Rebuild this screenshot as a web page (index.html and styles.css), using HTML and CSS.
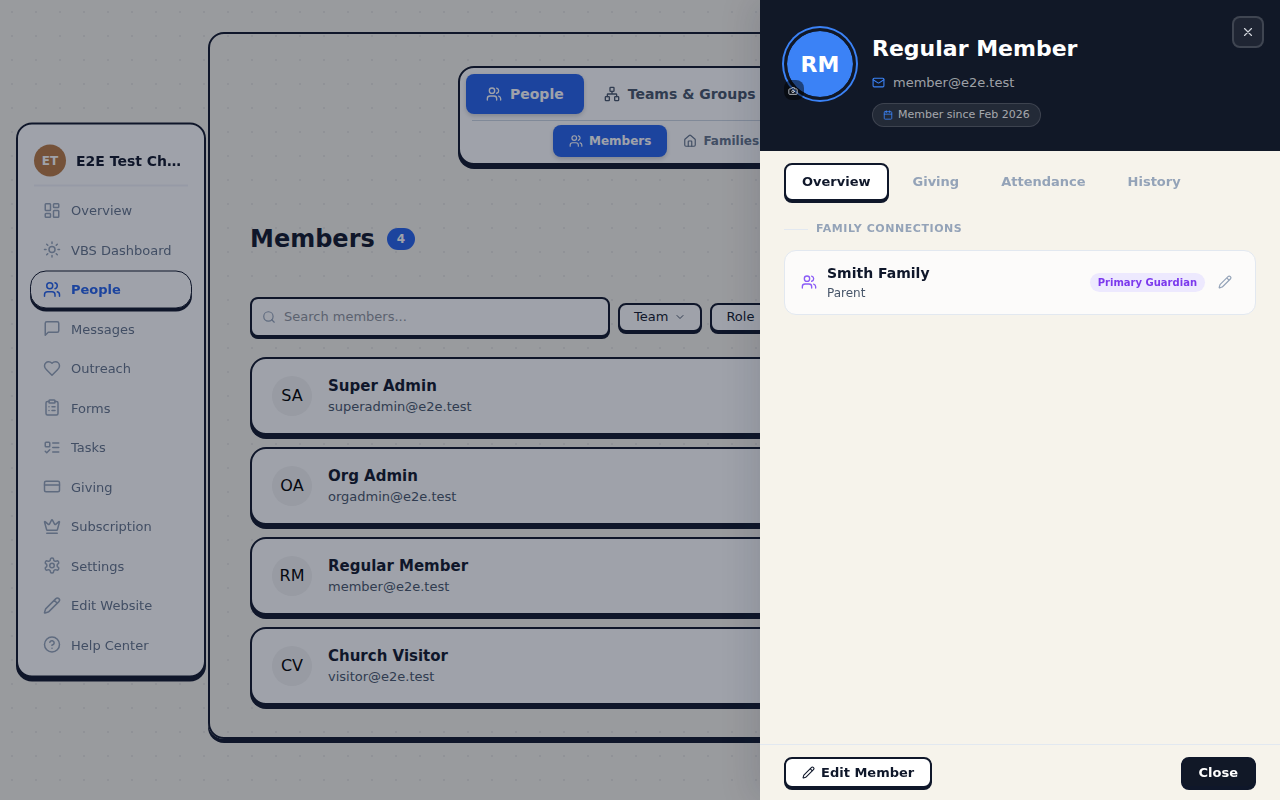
FILE: index.html
```html
<!DOCTYPE html>
<html lang="en">
<head>
  <meta charset="UTF-8" />
  <meta name="viewport" content="width=device-width, initial-scale=1.0"/>
  <title>Members</title>
  <link rel="stylesheet" href="styles.css">
</head>
<body>
  <!-- shared icons -->
  <svg class="sprite" aria-hidden="true">
    <symbol id="i-users" viewBox="0 0 24 24"><path d="M16 21v-2a4 4 0 0 0-4-4H6a4 4 0 0 0-4 4v2"/><circle cx="9" cy="7" r="4"/><path d="M22 21v-2a4 4 0 0 0-3-3.87"/><path d="M16 3.13a4 4 0 0 1 0 7.75"/></symbol>
    <symbol id="i-grid" viewBox="0 0 24 24"><rect x="3" y="3" width="7" height="9" rx="1"/><rect x="14" y="3" width="7" height="5" rx="1"/><rect x="14" y="12" width="7" height="9" rx="1"/><rect x="3" y="16" width="7" height="5" rx="1"/></symbol>
    <symbol id="i-sun" viewBox="0 0 24 24"><circle cx="12" cy="12" r="4"/><path d="M12 2v2M12 20v2M4.93 4.93l1.41 1.41M17.66 17.66l1.41 1.41M2 12h2M20 12h2M6.34 17.66l-1.41 1.41M19.07 4.93l-1.41 1.41"/></symbol>
    <symbol id="i-message" viewBox="0 0 24 24"><path d="M21 15a2 2 0 0 1-2 2H7l-4 4V5a2 2 0 0 1 2-2h14a2 2 0 0 1 2 2z"/></symbol>
    <symbol id="i-heart" viewBox="0 0 24 24"><path d="M19 14c1.49-1.46 3-3.21 3-5.5A5.5 5.5 0 0 0 16.5 3c-1.76 0-3 .5-4.5 2-1.5-1.5-2.74-2-4.5-2A5.5 5.5 0 0 0 2 8.5c0 2.3 1.5 4.05 3 5.5l7 7Z"/></symbol>
    <symbol id="i-clipboard" viewBox="0 0 24 24"><rect x="8" y="2" width="8" height="4" rx="1"/><path d="M16 4h2a2 2 0 0 1 2 2v14a2 2 0 0 1-2 2H6a2 2 0 0 1-2-2V6a2 2 0 0 1 2-2h2M12 11h4M12 16h4M8 11h.01M8 16h.01"/></symbol>
    <symbol id="i-tasks" viewBox="0 0 24 24"><rect x="3" y="5" width="6" height="6" rx="1"/><path d="m3 17 2 2 4-4M13 6h8M13 12h8M13 18h8"/></symbol>
    <symbol id="i-card" viewBox="0 0 24 24"><rect x="2" y="5" width="20" height="14" rx="2"/><path d="M2 10h20"/></symbol>
    <symbol id="i-crown" viewBox="0 0 24 24"><path d="M11.562 3.266a.5.5 0 0 1 .876 0L15.39 8.87a1 1 0 0 0 1.516.294L21.183 5.5a.5.5 0 0 1 .798.519l-2.834 10.246a1 1 0 0 1-.956.734H5.81a1 1 0 0 1-.957-.734L2.02 6.02a.5.5 0 0 1 .798-.519l4.276 3.664a1 1 0 0 0 1.516-.294zM5 21h14"/></symbol>
    <symbol id="i-settings" viewBox="0 0 24 24"><path d="M12.22 2h-.44a2 2 0 0 0-2 2v.18a2 2 0 0 1-1 1.73l-.43.25a2 2 0 0 1-2 0l-.15-.08a2 2 0 0 0-2.73.73l-.22.38a2 2 0 0 0 .73 2.73l.15.1a2 2 0 0 1 1 1.72v.51a2 2 0 0 1-1 1.74l-.15.09a2 2 0 0 0-.73 2.73l.22.38a2 2 0 0 0 2.73.73l.15-.08a2 2 0 0 1 2 0l.43.25a2 2 0 0 1 1 1.73V20a2 2 0 0 0 2 2h.44a2 2 0 0 0 2-2v-.18a2 2 0 0 1 1-1.73l.43-.25a2 2 0 0 1 2 0l.15.08a2 2 0 0 0 2.73-.73l.22-.39a2 2 0 0 0-.73-2.73l-.15-.08a2 2 0 0 1-1-1.74v-.5a2 2 0 0 1 1-1.74l.15-.09a2 2 0 0 0 .73-2.73l-.22-.38a2 2 0 0 0-2.73-.73l-.15.08a2 2 0 0 1-2 0l-.43-.25a2 2 0 0 1-1-1.73V4a2 2 0 0 0-2-2z"/><circle cx="12" cy="12" r="3"/></symbol>
    <symbol id="i-pencil" viewBox="0 0 24 24"><path d="M21.174 6.812a1 1 0 0 0-3.986-3.987L3.842 16.174a2 2 0 0 0-.5.83l-1.321 4.352a.5.5 0 0 0 .623.622l4.353-1.32a2 2 0 0 0 .83-.497zM15 5l4 4"/></symbol>
    <symbol id="i-help" viewBox="0 0 24 24"><circle cx="12" cy="12" r="10"/><path d="M9.09 9a3 3 0 0 1 5.83 1c0 2-3 3-3 3M12 17h.01"/></symbol>
    <symbol id="i-network" viewBox="0 0 24 24"><rect x="16" y="16" width="6" height="6" rx="1"/><rect x="2" y="16" width="6" height="6" rx="1"/><rect x="9" y="2" width="6" height="6" rx="1"/><path d="M5 16v-3a1 1 0 0 1 1-1h12a1 1 0 0 1 1 1v3M12 12V8"/></symbol>
    <symbol id="i-home" viewBox="0 0 24 24"><path d="M15 21v-8a1 1 0 0 0-1-1h-4a1 1 0 0 0-1 1v8"/><path d="M3 10a2 2 0 0 1 .709-1.528l7-5.999a2 2 0 0 1 2.582 0l7 5.999A2 2 0 0 1 21 10v9a2 2 0 0 1-2 2H5a2 2 0 0 1-2-2z"/></symbol>
    <symbol id="i-search" viewBox="0 0 24 24"><circle cx="11" cy="11" r="8"/><path d="m21 21-4.3-4.3"/></symbol>
    <symbol id="i-chevron" viewBox="0 0 24 24"><path d="m6 9 6 6 6-6"/></symbol>
    <symbol id="i-mail" viewBox="0 0 24 24"><rect x="2" y="4" width="20" height="16" rx="2"/><path d="m22 7-8.97 5.7a1.94 1.94 0 0 1-2.06 0L2 7"/></symbol>
    <symbol id="i-calendar" viewBox="0 0 24 24"><path d="M8 2v4M16 2v4M3 10h18"/><rect x="3" y="4" width="18" height="18" rx="2"/></symbol>
    <symbol id="i-camera" viewBox="0 0 24 24"><path d="M14.5 4h-5L7 7H4a2 2 0 0 0-2 2v9a2 2 0 0 0 2 2h16a2 2 0 0 0 2-2V9a2 2 0 0 0-2-2h-3z"/><circle cx="12" cy="13" r="3"/></symbol>
    <symbol id="i-x" viewBox="0 0 24 24"><path d="M18 6 6 18M6 6l12 12"/></symbol>
  </svg>

  <aside class="sidebar">
    <div class="org">
      <span class="org-avatar">ET</span>
      <span class="org-name">E2E Test Church</span>
    </div>
    <nav class="side-nav">
      <a href="#"><svg class="icon"><use href="#i-grid"/></svg>Overview</a>
      <a href="#"><svg class="icon"><use href="#i-sun"/></svg>VBS Dashboard</a>
      <a href="#" class="active"><svg class="icon"><use href="#i-users"/></svg>People</a>
      <a href="#"><svg class="icon"><use href="#i-message"/></svg>Messages</a>
      <a href="#"><svg class="icon"><use href="#i-heart"/></svg>Outreach</a>
      <a href="#"><svg class="icon"><use href="#i-clipboard"/></svg>Forms</a>
      <a href="#"><svg class="icon"><use href="#i-tasks"/></svg>Tasks</a>
      <a href="#"><svg class="icon"><use href="#i-card"/></svg>Giving</a>
      <a href="#"><svg class="icon"><use href="#i-crown"/></svg>Subscription</a>
      <a href="#"><svg class="icon"><use href="#i-settings"/></svg>Settings</a>
      <a href="#"><svg class="icon"><use href="#i-pencil"/></svg>Edit Website</a>
      <a href="#"><svg class="icon"><use href="#i-help"/></svg>Help Center</a>
    </nav>
  </aside>

  <main class="panel">
    <div class="topnav">
      <div class="topnav-main">
        <button class="active"><svg class="icon"><use href="#i-users"/></svg>People</button>
        <button><svg class="icon"><use href="#i-network"/></svg>Teams &amp; Groups</button>
      </div>
      <div class="topnav-sub">
        <button class="active"><svg class="icon"><use href="#i-users"/></svg>Members</button>
        <button><svg class="icon"><use href="#i-home"/></svg>Families</button>
      </div>
    </div>

    <div class="title-row">
      <h1>Members</h1>
      <span class="count">4</span>
    </div>

    <div class="filters">
      <label class="search">
        <svg class="icon"><use href="#i-search"/></svg>
        <input type="text" placeholder="Search members..." aria-label="Search members" />
      </label>
      <button class="filter">Team<svg class="icon"><use href="#i-chevron"/></svg></button>
      <button class="filter">Role<svg class="icon"><use href="#i-chevron"/></svg></button>
    </div>

    <div class="members">
      <div class="member">
        <span class="member-avatar">SA</span>
        <div><h3>Super Admin</h3><p>superadmin@e2e.test</p></div>
      </div>
      <div class="member">
        <span class="member-avatar">OA</span>
        <div><h3>Org Admin</h3><p>orgadmin@e2e.test</p></div>
      </div>
      <div class="member">
        <span class="member-avatar">RM</span>
        <div><h3>Regular Member</h3><p>member@e2e.test</p></div>
      </div>
      <div class="member">
        <span class="member-avatar">CV</span>
        <div><h3>Church Visitor</h3><p>visitor@e2e.test</p></div>
      </div>
    </div>
  </main>

  <div class="overlay"></div>

  <section class="drawer" role="dialog" aria-labelledby="drawerName">
    <header class="drawer-header">
      <div class="profile-avatar">
        RM
        <button class="camera" aria-label="Change photo"><svg class="icon"><use href="#i-camera"/></svg></button>
      </div>
      <div class="profile">
        <h2 id="drawerName">Regular Member</h2>
        <p class="profile-email"><svg class="icon"><use href="#i-mail"/></svg>member@e2e.test</p>
        <span class="since"><svg class="icon"><use href="#i-calendar"/></svg>Member since Feb 2026</span>
      </div>
      <button class="drawer-x" aria-label="Close"><svg class="icon"><use href="#i-x"/></svg></button>
    </header>

    <div class="tabs" role="tablist">
      <button class="active" role="tab">Overview</button>
      <button role="tab">Giving</button>
      <button role="tab">Attendance</button>
      <button role="tab">History</button>
    </div>

    <div class="drawer-body">
      <h4>Family Connections</h4>
      <div class="family">
        <svg class="icon"><use href="#i-users"/></svg>
        <div class="family-text">
          <h3>Smith Family</h3>
          <p>Parent</p>
        </div>
        <span class="tag">Primary Guardian</span>
        <button class="family-edit" aria-label="Edit family role"><svg class="icon"><use href="#i-pencil"/></svg></button>
      </div>
    </div>

    <footer class="drawer-footer">
      <button class="btn"><svg class="icon"><use href="#i-pencil"/></svg>Edit Member</button>
      <button class="btn btn-dark">Close</button>
    </footer>
  </section>
</body>
</html>
```

FILE: styles.css
```css
:root {
  --ink: #0f172a;
  --blue: #2563eb;
  --slate: #64748b;
  --muted: #94a3b8;
  --line: #e2e8f0;
  --cream: #f6f3eb;
}
* {
  box-sizing: border-box;
}
body {
  margin: 0;
  min-height: 100vh;
  padding: 32px 16px 32px 208px;
  font-family: "DejaVu Sans", sans-serif;
  font-size: 13px;
  line-height: 1.5;
  color: var(--ink);
  background-color: var(--cream);
  background-image: radial-gradient(circle, #e6e4e0 1px, transparent 1px);
  background-size: 24px 24px;
}
h1, h2, h3, h4, p {
  margin: 0;
}
button {
  font: inherit;
  color: inherit;
  background: none;
  border: none;
  padding: 0;
  cursor: pointer;
  white-space: nowrap;
}
.sprite {
  display: none;
}
.icon {
  width: 16px;
  height: 16px;
  flex-shrink: 0;
  fill: none;
  stroke: currentColor;
  stroke-width: 2;
  stroke-linecap: round;
  stroke-linejoin: round;
}

/* sidebar */
.sidebar {
  position: fixed;
  left: 16px;
  top: 50%;
  transform: translateY(-50%);
  width: 190px;
  padding: 12px;
  background: #fff;
  border: 2px solid var(--ink);
  border-radius: 16px;
  box-shadow: 0 4px 0 var(--ink);
}
.org {
  display: flex;
  align-items: center;
  gap: 10px;
  margin: 0 4px 5px;
  padding: 8px 0;
  border-bottom: 2px solid #f1f2f9;
}
.org-avatar {
  display: flex;
  align-items: center;
  justify-content: center;
  width: 32px;
  height: 32px;
  flex-shrink: 0;
  border-radius: 50%;
  background: #b97a43;
  color: #fff;
  font-size: 12px;
  font-weight: bold;
}
.org-name {
  padding-right: 4px;
  font-size: 14px;
  font-weight: bold;
  overflow: hidden;
  text-overflow: ellipsis;
  white-space: nowrap;
}
.side-nav {
  display: flex;
  flex-direction: column;
  gap: 2px;
}
.side-nav a {
  display: flex;
  align-items: center;
  gap: 10px;
  padding: 9px 13px;
  border-radius: 16px;
  color: var(--slate);
  text-decoration: none;
}
.side-nav .icon {
  width: 18px;
  height: 18px;
  color: var(--muted);
}
.side-nav a.active {
  padding: 8px 12px;
  border: 1px solid var(--ink);
  background: #fff;
  color: var(--blue);
  font-weight: bold;
  box-shadow: 0 3px 0 var(--ink);
}
.side-nav a.active .icon {
  color: var(--blue);
}

/* main panel */
.panel {
  padding: 32px 40px;
  border: 2px solid var(--ink);
  border-radius: 16px;
  box-shadow: 0 4px 0 var(--ink);
}
.topnav {
  width: 556px;
  max-width: 100%;
  margin: 0 auto 56px;
  padding: 6px;
  background: #fff;
  border: 2px solid var(--ink);
  border-radius: 16px;
  box-shadow: 0 4px 0 var(--ink);
}
.topnav-main, .topnav-sub {
  display: flex;
}
.topnav button {
  display: flex;
  align-items: center;
  border-radius: 8px;
  font-weight: bold;
}
.topnav button.active {
  background: var(--blue);
  color: #fff;
  box-shadow: 0 2px 4px rgba(15, 23, 42, 0.2);
}
.topnav-main {
  margin-bottom: 6px;
}
.topnav-main button {
  gap: 8px;
  height: 40px;
  padding: 0 20px;
  font-size: 14px;
  color: #475569;
}
.topnav-sub {
  margin: 0 6px;
  padding: 4px 81px 0;
  border-top: 1px solid #cbd5e1;
}
.topnav-sub button {
  gap: 6px;
  height: 32px;
  padding: 0 16px;
  font-size: 12px;
  color: var(--slate);
}
.topnav-sub .icon {
  width: 14px;
  height: 14px;
}
.title-row {
  display: flex;
  align-items: center;
  gap: 12px;
  margin-bottom: 40px;
}
h1 {
  font-size: 24px;
}
.count {
  padding: 2px 10px;
  border-radius: 12px;
  background: var(--blue);
  color: #fff;
  font-size: 12px;
  font-weight: bold;
}
.filters {
  display: flex;
  align-items: center;
  gap: 8px;
  margin-bottom: 20px;
}
.search {
  display: flex;
  align-items: center;
  gap: 8px;
  width: 360px;
  height: 40px;
  padding: 0 10px;
  background: #fff;
  border: 2px solid var(--ink);
  border-radius: 8px;
  box-shadow: 0 2px 0 var(--ink);
}
.search .icon {
  width: 14px;
  height: 14px;
  color: var(--muted);
}
.search input {
  flex: 1;
  min-width: 0;
  border: none;
  padding: 0;
  outline: none;
  background: none;
  font: inherit;
  color: inherit;
}
.search input::placeholder {
  color: #8f949d;
  opacity: 1;
}
.filter {
  display: flex;
  align-items: center;
  gap: 6px;
  height: 29px;
  padding: 0 14px;
  background: #fff;
  border: 2px solid var(--ink);
  border-radius: 8px;
  box-shadow: 0 2px 0 var(--ink);
}
.filter .icon {
  width: 12px;
  height: 12px;
  color: #475569;
}
.members {
  display: flex;
  flex-direction: column;
  gap: 12px;
}
.member {
  display: flex;
  align-items: center;
  gap: 16px;
  min-height: 78px;
  padding: 16px 20px;
  background: #fff;
  border: 2px solid var(--ink);
  border-radius: 16px;
  box-shadow: 0 4px 0 var(--ink);
}
.member-avatar {
  display: flex;
  align-items: center;
  justify-content: center;
  width: 40px;
  height: 40px;
  border-radius: 50%;
  background: #f3f3f3;
  color: #000;
  font-size: 16px;
}
.member h3 {
  font-size: 15px;
  line-height: 21px;
}
.member p {
  color: #475569;
  line-height: 20px;
}

/* drawer */
.overlay {
  position: fixed;
  inset: 0;
  background: rgba(15, 23, 42, 0.4);
}
.drawer {
  position: fixed;
  top: 0;
  right: 0;
  bottom: 0;
  width: 520px;
  max-width: 100%;
  display: flex;
  flex-direction: column;
  background: var(--cream);
  box-shadow: -8px 0 32px rgba(15, 23, 42, 0.12);
}
.drawer-header {
  position: relative;
  display: flex;
  gap: 16px;
  padding: 28px 24px 24px;
  background: #111827;
  color: #fff;
}
.profile-avatar {
  position: relative;
  display: flex;
  align-items: center;
  justify-content: center;
  width: 72px;
  height: 72px;
  flex-shrink: 0;
  border: 3px solid #111827;
  border-radius: 50%;
  background: #3b82f6;
  background-clip: padding-box;
  box-shadow: 0 0 0 2px #3b82f6;
  font-size: 22px;
  font-weight: bold;
}
.camera {
  position: absolute;
  left: -3px;
  bottom: -3px;
  display: flex;
  align-items: center;
  justify-content: center;
  width: 20px;
  height: 20px;
  padding: 2px 2px 0 0;
  border-radius: 8px;
  background: rgba(0, 0, 0, 0.5);
  color: #d1d5db;
}
.camera .icon {
  width: 10px;
  height: 10px;
}
.profile {
  padding-top: 4px;
}
h2 {
  font-size: 22px;
}
.profile-email {
  display: flex;
  align-items: center;
  gap: 8px;
  margin: 8px 0 10px;
  color: rgba(255, 255, 255, 0.6);
}
.profile-email .icon {
  width: 13px;
  height: 13px;
  color: #3b82f6;
}
.since {
  display: inline-flex;
  align-items: center;
  gap: 5px;
  padding: 3px 10px;
  border: 1px solid rgba(255, 255, 255, 0.12);
  border-radius: 16px;
  background: rgba(255, 255, 255, 0.08);
  color: rgba(255, 255, 255, 0.6);
  font-size: 11px;
}
.since .icon {
  width: 10px;
  height: 10px;
  color: #3b82f6;
}
.drawer-x {
  position: absolute;
  top: 16px;
  right: 16px;
  display: flex;
  align-items: center;
  justify-content: center;
  width: 32px;
  height: 32px;
  border: 2px solid rgba(255, 255, 255, 0.15);
  border-radius: 8px;
  background: rgba(255, 255, 255, 0.06);
  color: #d1d5db;
}
.tabs {
  display: flex;
  gap: 6px;
  padding: 12px 24px 0;
}
.tabs button {
  height: 38px;
  padding: 0 16px;
  border: 2px solid transparent;
  border-radius: 8px;
  color: var(--muted);
  font-weight: bold;
}
.tabs button.active {
  background: #fff;
  border-color: var(--ink);
  color: var(--ink);
  box-shadow: 0 2px 0 var(--ink);
}
.drawer-body {
  flex: 1;
  padding: 20px 24px;
  overflow: auto;
}
h4 {
  display: flex;
  align-items: center;
  gap: 8px;
  margin-bottom: 12px;
  color: var(--muted);
  font-size: 11px;
  letter-spacing: 0.05em;
  text-transform: uppercase;
}
h4::before {
  content: "";
  width: 24px;
  height: 1px;
  background: var(--line);
}
.family {
  display: flex;
  align-items: center;
  gap: 10px;
  padding: 12px 16px;
  background: #fcfbfa;
  border: 1px solid var(--line);
  border-radius: 12px;
}
.family > .icon {
  color: #8b5cf6;
}
.family-text {
  flex: 1;
}
.family h3 {
  font-size: 14px;
}
.family p {
  color: #475569;
  font-size: 12px;
}
.tag {
  padding: 2px 8px;
  border-radius: 12px;
  background: #ede9fe;
  color: #7c3aed;
  font-size: 10px;
  font-weight: bold;
}
.family-edit {
  display: flex;
  margin-left: -4px;
  padding: 7px;
  color: var(--muted);
}
.family-edit .icon, .drawer-x .icon {
  width: 14px;
  height: 14px;
}
.drawer-footer {
  display: flex;
  justify-content: space-between;
  padding: 12px 24px;
  border-top: 1px solid var(--line);
}
.btn {
  display: flex;
  align-items: center;
  gap: 6px;
  padding: 4px 16px;
  background: #fff;
  border: 2px solid var(--ink);
  border-radius: 8px;
  box-shadow: 0 2px 0 var(--ink);
  font-weight: bold;
}
.btn .icon {
  width: 13px;
  height: 13px;
}
.btn-dark {
  background: #111827;
  color: #fff;
}
```
